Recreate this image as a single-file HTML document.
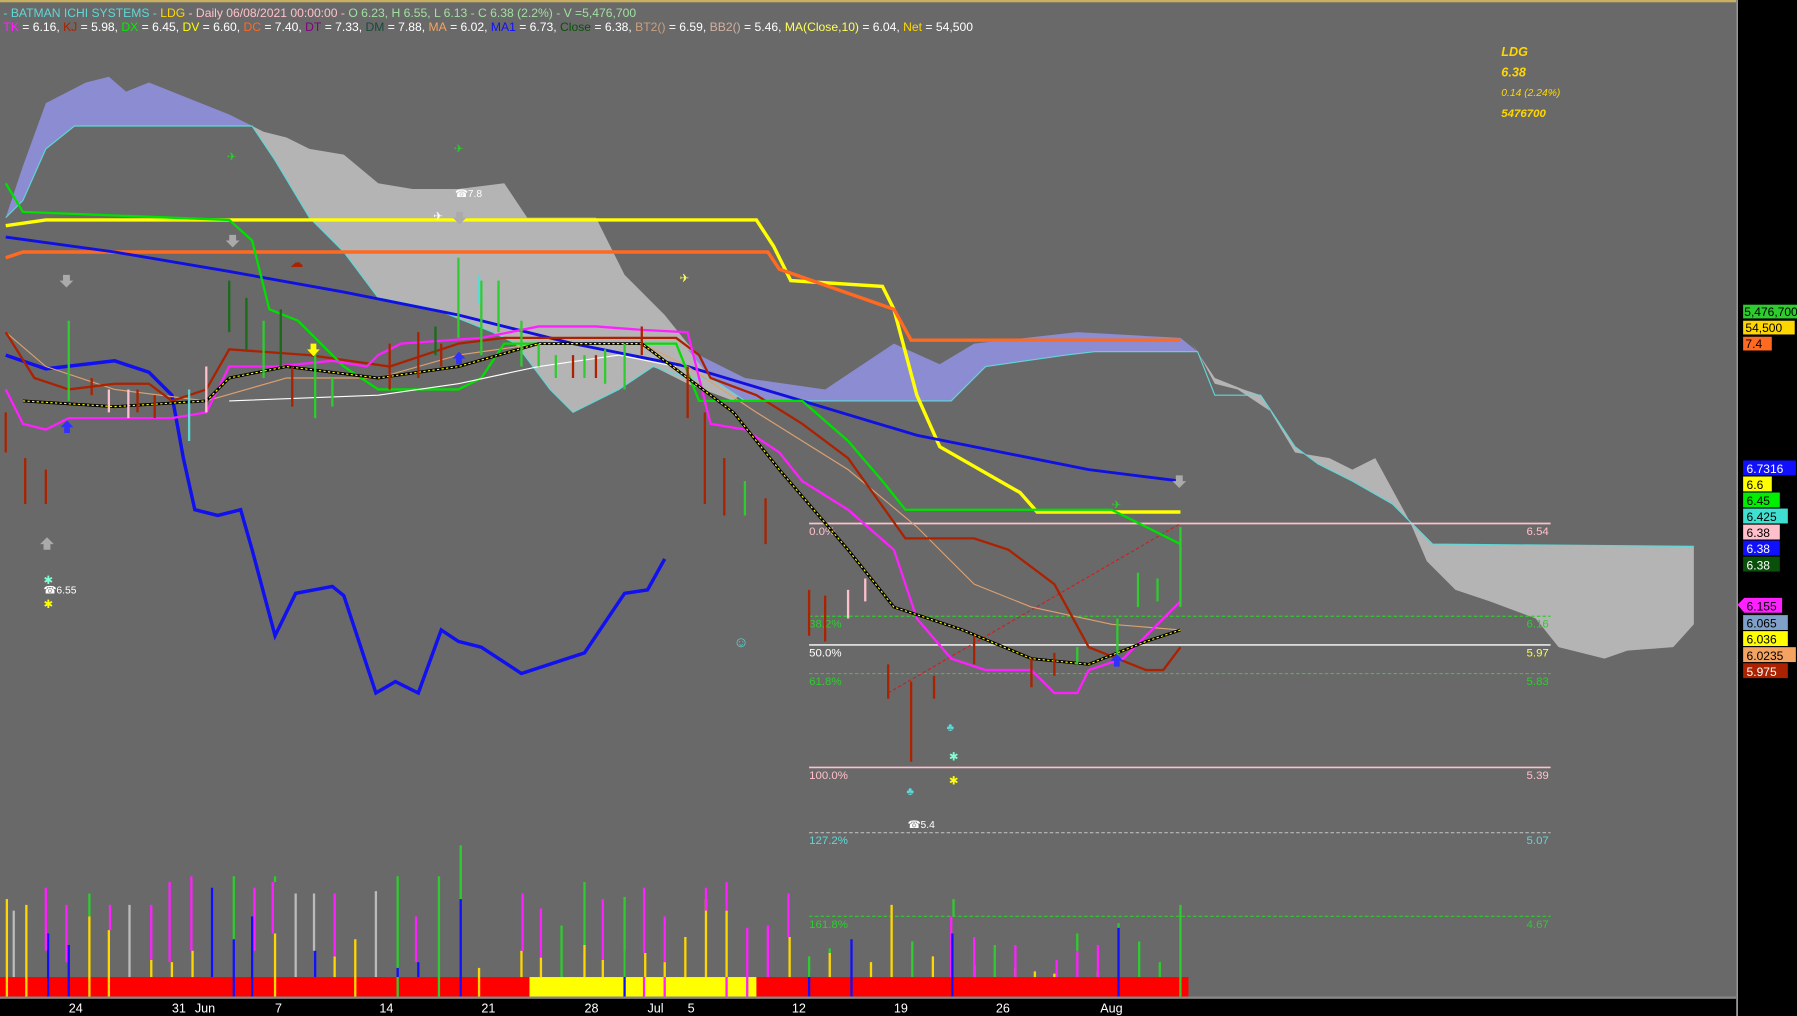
<!DOCTYPE html>
<html><head><meta charset="utf-8"><style>
html,body{margin:0;padding:0;background:#696969;overflow:hidden}
svg{display:block}
text{font-family:"Liberation Sans",sans-serif}
</style></head><body>
<svg width="1797" height="1016" viewBox="0 0 1568 887" preserveAspectRatio="none" xmlns="http://www.w3.org/2000/svg">
<rect x="0" y="0" width="1568" height="887" fill="#696969"/>
<rect x="0" y="0" width="1515" height="2" fill="#c8b060"/>
<polygon fill="#b4b4b4" points="200,100 230,115 250,120 270,130 300,135 330,160 360,165 400,165 440,160 460,190 520,190 545,240 580,275 600,300 620,320 650,340 640,350 600,335 570,320 540,340 500,360 480,340 450,300 430,290 380,270 330,260 300,220 270,190 240,140 220,110"/>
<polygon fill="#b4b4b4" points="1040,300 1060,330 1085,340 1100,345 1130,395 1160,400 1180,410 1200,400 1230,455 1250,475 1478,477 1478,545 1460,565 1420,568 1400,575 1380,570 1360,565 1340,540 1300,525 1270,515 1245,490 1230,455 1215,440 1180,420 1150,405 1130,390 1110,360 1080,340 1060,335 1045,307"/>
<polygon fill="#8c8cd2" points="5,190 20,145 40,90 75,72 95,67 110,80 130,72 150,80 200,100 230,115 220,110 65,110 40,130 20,175"/>
<polygon fill="#8c8cd2" points="600,305 650,330 720,340 780,300 820,318 850,300 940,290 1030,295 1045,307 955,307 930,310 860,320 840,340 830,350 650,350 620,330"/>
<polyline fill="none" stroke="#5fd7d7" stroke-width="1" points="5,190 20,175 40,130 65,110 220,110 240,140 270,190 300,220 330,260 380,270 430,290 450,300 480,340 500,360 540,340 570,320 600,330 620,330 650,350 830,350 840,340 860,320 930,310 955,307 1045,307 1060,345 1100,345 1130,390 1150,405 1180,420 1215,440 1230,455 1250,475 1478,477"/>
<g font-size="10">
<line x1="706" y1="457" x2="1353" y2="457" stroke="#ffc0cb" stroke-width="1.5"/>
<line x1="706" y1="538" x2="1353" y2="538" stroke="#2ecc2e" stroke-dasharray="3,2"/>
<line x1="706" y1="563" x2="1353" y2="563" stroke="#ffffff" stroke-width="1.2"/>
<line x1="706" y1="588" x2="1353" y2="588" stroke="#2ecc2e" stroke-dasharray="3,2"/>
<line x1="706" y1="670" x2="1353" y2="670" stroke="#ffc0cb" stroke-width="1.5"/>
<line x1="706" y1="727" x2="1353" y2="727" stroke="#bbbbbb" stroke-dasharray="3,2"/>
<line x1="706" y1="800" x2="1353" y2="800" stroke="#2ecc2e" stroke-dasharray="3,2"/>
<text x="706" y="467" fill="#ffc0cb">0.0%</text><text x="1332" y="467" fill="#ffc0cb">6.54</text>
<text x="706" y="548" fill="#2ecc2e">38.2%</text><text x="1332" y="548" fill="#2ecc2e">6.16</text>
<text x="706" y="573" fill="#fff">50.0%</text><text x="1332" y="573" fill="#ffff40">5.97</text>
<text x="706" y="598" fill="#2ecc2e">61.8%</text><text x="1332" y="598" fill="#2ecc2e">5.83</text>
<text x="706" y="680" fill="#ffc0cb">100.0%</text><text x="1332" y="680" fill="#ffc0cb">5.39</text>
<text x="706" y="737" fill="#5fd7d7">127.2%</text><text x="1332" y="737" fill="#5fd7d7">5.07</text>
<text x="706" y="810" fill="#2ecc2e">161.8%</text><text x="1332" y="810" fill="#2ecc2e">4.67</text>
</g>
<line x1="775" y1="605" x2="1030" y2="457" stroke="#cc2020" stroke-dasharray="3,2"/>
<polyline fill="none" stroke="#ffff00" stroke-width="3" points="5,197 40,192 660,192 675,215 690,245 770,250 780,270 800,345 820,390 890,430 905,447 1030,447"/>
<polyline fill="none" stroke="#ff6a20" stroke-width="3" points="5,225 20,220 670,220 680,235 780,270 795,297 1030,297"/>
<polyline fill="none" stroke="#1010e0" stroke-width="2.5" points="5,207 100,220 200,237 300,255 400,275 500,300 600,320 700,350 800,380 900,400 950,410 1030,420"/>
<polyline fill="none" stroke="#1010f0" stroke-width="3" points="5,310 40,322 100,315 130,325 150,345 160,400 170,445 190,450 210,445 220,480 240,555 258,518 290,512 300,520 328,605 345,595 365,605 385,550 400,560 420,565 455,588 510,570 545,518 565,515 580,488"/>
<polyline fill="none" stroke="#dda070" stroke-width="1" points="5,290 40,320 100,340 180,350 250,330 330,330 400,310 470,300 560,300 600,320 660,360 740,410 800,460 850,510 900,530 970,545 1030,550"/>
<polyline fill="none" stroke="#aa2200" stroke-width="2" points="5,290 30,330 60,340 100,335 130,335 150,350 180,340 200,305 270,310 340,320 400,300 440,295 590,295 610,310 620,330 660,345 700,370 740,400 790,470 850,470 880,480 920,510 950,565 1000,585 1015,585 1030,565"/>
<polyline fill="none" stroke="#00e000" stroke-width="2" points="5,160 20,185 200,192 220,210 235,270 260,280 280,300 300,320 330,340 400,340 420,330 440,300 590,300 610,350 700,350 740,385 770,420 790,445 970,445 990,455 1030,475"/>
<polyline fill="none" stroke="#ff20ff" stroke-width="2" points="5,340 20,370 40,375 60,365 150,365 180,360 200,320 240,320 290,315 320,320 330,310 350,300 420,295 470,285 520,285 560,288 600,290 620,370 650,375 680,395 700,420 740,445 780,480 800,540 830,575 860,585 900,585 920,605 940,605 950,585 980,575 1000,555 1030,525"/>
<polyline fill="none" stroke="#ffffff" stroke-width="1" points="200,350 330,345 400,335 470,320 540,310 590,320"/>
<polyline fill="none" stroke="#000" stroke-width="2.5" points="20,350 100,355 180,350 200,330 250,320 330,330 400,320 470,300 560,300 600,330 640,360 680,410 740,480 780,530 840,550 900,575 950,580 1000,560 1030,550"/>
<polyline fill="none" stroke="#ffff00" stroke-width="1" stroke-dasharray="2,2" points="20,350 100,355 180,350 200,330 250,320 330,330 400,320 470,300 560,300 600,330 640,360 680,410 740,480 780,530 840,550 900,575 950,580 1000,560 1030,550"/>
<g stroke-width="2">
<path stroke="#aa2200" d="M5,360V395M22,400V440M40,410V440M80,330V345M120,340V360M135,345V365M255,320V355M340,300V340M365,290V330M385,300V320M500,310V330M520,310V330M560,285V310M600,320V365M615,360V440M632,400V450M668,435V475M706,515V555M720,520V560M775,580V610M795,595V665M815,590V610M850,555V580M900,575V600M920,570V590"/>
<path stroke="#2ecc2e" d="M60,280V350M230,280V330M275,300V365M290,330V355M400,225V295M420,245V310M435,245V290M455,280V320M470,300V320M485,310V330M510,310V330M528,305V335M545,300V340M650,420V450M940,565V580M975,540V580M993,500V530M1010,505V525M1030,460V530"/>
<path stroke="#1a6a1a" d="M200,245V290M215,260V305M245,270V320M380,285V310"/>
<path stroke="#ffc0cb" d="M95,340V360M112,340V365M180,320V360M740,515V540M755,505V525"/>
<path stroke="#5fd7d7" d="M165,340V385M418,240V265"/>
</g>
<g font-size="10" fill="#fff">
<text x="397" y="172" font-size="9">☎7.8</text>
<text x="38" y="518" font-size="9">☎6.55</text>
<text x="792" y="723" font-size="9">☎5.4</text>
<text x="38" y="510" fill="#7fffd4">✱</text><text x="38" y="531" fill="#ffff00">✱</text>
<text x="828" y="664" fill="#7fffd4">✱</text><text x="828" y="685" fill="#ffff00">✱</text>
<text x="826" y="638" fill="#5fd7d7">♣</text><text x="791" y="694" fill="#5fd7d7">♣</text>
<text x="640" y="565" fill="#5fd7d7" font-size="13">☺</text>
<text x="198" y="140" fill="#2ecc2e">✈</text><text x="396" y="133" fill="#2ecc2e">✈</text>
<text x="378" y="192">✈</text><text x="593" y="246" fill="#ffff60">✈</text>
<text x="970" y="444" fill="#2ecc2e">✈</text>
<text x="253" y="233" fill="#aa2200" font-size="12">☁</text>
</g>
<g fill="#aaaaaa"><path d="M55,240h6v5h3l-6,6-6-6h3z"/><path d="M38,480h6v-5h3l-6-6-6,6h3z"/><path d="M200,205h6v5h3l-6,6-6-6h3z"/><path d="M398,185h6v5h3l-6,6-6-6h3z"/><path d="M1026,415h6v5h3l-6,6-6-6h3z"/></g>
<g fill="#3030ff"><path d="M56,378h5v-5h3l-5.5-6-5.5,6h3z"/><path d="M398,318h5v-5h3l-5.5-6-5.5,6h3z"/><path d="M972,582h5v-5h3l-5.5-6-5.5,6h3z"/></g>
<g fill="#ffff00"><path d="M271,300h5v5h3l-5.5,6-5.5-6h3z"/></g>
<g stroke-width="2">
<path stroke="#ffd700" d="M6,785V870M23,790V870M78,800V870M95,812V870M132,838V870M150,840V870M168,830V870M185,855V870M240,815V870M292,835V870M310,820V870M418,845V870M455,830V870M472,836V870M510,825V870M526,838V870M563,832V870M580,840V870M598,818V870M616,785V870M634,795V870M689,818V870M724,832V870M760,840V870M778,790V870M814,835V870M850,843V870M886,845V870M903,848V870M920,850V870M958,848V870"/>
<path stroke="#ff20ff" d="M40,775V830M58,790V840M96,790V812M132,790V838M148,770V840M167,765V830M222,775V830M238,770V815M292,780V835M363,800V840M456,780V830M472,793V836M526,785V838M562,775V832M580,800V840M616,775V795M634,770V795M652,810V870M670,808V870M688,780V818M830,800V870M850,818V870M886,825V870M922,838V870M940,830V870M958,825V870"/>
<path stroke="#1010ff" d="M42,815V870M60,825V870M185,775V855M204,820V870M220,800V870M275,830V870M347,845V870M365,840V870M402,785V870M545,830V870M706,850V870M743,820V870M831,815V870M976,810V870"/>
<path stroke="#2ecc2e" d="M78,780V800M204,765V820M240,765V770M347,765V845M383,765V870M402,738V785M490,808V870M510,770V825M545,783V870M706,835V870M724,828V832M796,822V870M832,785V800M868,825V870M940,815V830M976,806V810M994,822V870M1012,840V870M1030,790V870"/>
<path stroke="#bbbbbb" d="M12,795V870M113,790V870M258,780V870M274,780V830M328,778V870"/>
</g>
<rect x="0" y="853" width="1037" height="17" fill="#ff0000"/>
<rect x="462" y="853" width="198" height="17" fill="#ffff00"/>
<g stroke-width="2"><path stroke="#1010ff" d="M42,853V870M60,853V870M204,853V870M220,853V870M402,853V870M545,853V870M706,853V870M743,853V870M831,853V870M976,853V870"/><path stroke="#ffd700" d="M6,853V870M23,853V870M78,853V870M95,853V870M240,853V870M310,853V870M418,853V870"/><path stroke="#ff20ff" d="M562,853V870M580,853V870M634,853V870M652,853V870"/><path stroke="#2ecc2e" d="M347,853V870M383,853V870M1030,853V870"/></g>
<rect x="0" y="871" width="1515" height="16" fill="#000"/>
<rect x="0" y="870" width="1515" height="2" fill="#888"/>
<g fill="#fff" font-size="11">
<text x="60" y="884">24</text><text x="150" y="884">31</text><text x="170" y="884">Jun</text><text x="240" y="884">7</text><text x="331" y="884">14</text><text x="420" y="884">21</text><text x="510" y="884">28</text><text x="565" y="884">Jul</text><text x="600" y="884">5</text><text x="691" y="884">12</text><text x="780" y="884">19</text><text x="869" y="884">26</text><text x="960" y="884">Aug</text>
</g>
<rect x="1515" y="0" width="53" height="887" fill="#000"/>
<rect x="1515" y="0" width="1.5" height="887" fill="#999"/>
<g font-size="10.5">
<rect x="1521" y="266" width="47" height="12" fill="#2ecc2e"/><text x="1522" y="276" fill="#000">5,476,700</text>
<rect x="1521" y="280" width="45" height="12" fill="#ffd700"/><text x="1523" y="290" fill="#000">54,500</text>
<rect x="1521" y="294" width="25" height="12" fill="#ff6a20"/><text x="1523" y="304" fill="#000">7.4</text>
<rect x="1521" y="402" width="46" height="13" fill="#1010ff"/><text x="1524" y="413" fill="#fff">6.7316</text>
<rect x="1521" y="416" width="25" height="13" fill="#ffff00"/><text x="1524" y="427" fill="#000">6.6</text>
<rect x="1521" y="430" width="32" height="13" fill="#00ee00"/><text x="1524" y="441" fill="#000">6.45</text>
<rect x="1521" y="444" width="39" height="13" fill="#40e0d0"/><text x="1524" y="455" fill="#000">6.425</text>
<rect x="1521" y="458" width="32" height="13" fill="#ffc0cb"/><text x="1524" y="469" fill="#000">6.38</text>
<rect x="1521" y="472" width="32" height="13" fill="#1010ff"/><text x="1524" y="483" fill="#fff">6.38</text>
<rect x="1521" y="486" width="32" height="13" fill="#0a500a"/><text x="1524" y="497" fill="#fff">6.38</text>
<polygon points="1516,528 1522,522 1555,522 1555,535 1522,535" fill="#ff20ff"/><text x="1524" y="533" fill="#000">6.155</text>
<rect x="1521" y="537" width="39" height="13" fill="#7fa0c8"/><text x="1524" y="548" fill="#000">6.065</text>
<rect x="1521" y="551" width="39" height="13" fill="#ffff00"/><text x="1524" y="562" fill="#000">6.036</text>
<rect x="1521" y="565" width="46" height="13" fill="#f4a460"/><text x="1524" y="576" fill="#000">6.0235</text>
<rect x="1521" y="579" width="39" height="13" fill="#aa2200"/><text x="1524" y="590" fill="#fff">5.975</text>
</g>
<g font-size="10.6">
<text x="3" y="15"><tspan fill="#5fd7d7">- BATMAN  ICHI SYSTEMS - </tspan><tspan fill="#ffd700">LDG</tspan><tspan fill="#ffc0cb"> - Daily 06/08/2021 00:00:00 - </tspan><tspan fill="#a0e0a0">O 6.23, H 6.55, L 6.13 - C 6.38 (2.2%) - V =5,476,700</tspan></text>
<text x="3" y="27" fill="#fff"><tspan fill="#ff20ff">TK</tspan> = 6.16, <tspan fill="#aa2200">KJ</tspan> = 5.98, <tspan fill="#00ee00">DX</tspan> = 6.45, <tspan fill="#ffff00">DV</tspan> = 6.60, <tspan fill="#ff6a20">DC</tspan> = 7.40, <tspan fill="#800080">DT</tspan> = 7.33, <tspan fill="#1a4a3a">DM</tspan> = 7.88, <tspan fill="#f4a460">MA</tspan> = 6.02, <tspan fill="#1010ff">MA1</tspan> = 6.73, <tspan fill="#0a500a">Close</tspan> = 6.38, <tspan fill="#c8a080">BT2()</tspan> = 6.59, <tspan fill="#d0b0a0">BB2()</tspan> = 5.46, <tspan fill="#ffff60">MA(Close,10)</tspan> = 6.04, <tspan fill="#ffd700">Net</tspan> = 54,500</text>
</g>
<g fill="#ffd700" font-style="italic" font-weight="bold">
<text x="1310" y="49" font-size="11" font-family="Liberation Serif,serif">LDG</text>
<text x="1310" y="67" font-size="11" font-family="Liberation Serif,serif">6.38</text>
<text x="1310" y="84" font-size="9" font-weight="normal" font-family="Liberation Serif,serif">0.14 (2.24%)</text>
<text x="1310" y="102" font-size="10" font-family="Liberation Serif,serif">5476700</text>
</g>
</svg>
</body></html>
